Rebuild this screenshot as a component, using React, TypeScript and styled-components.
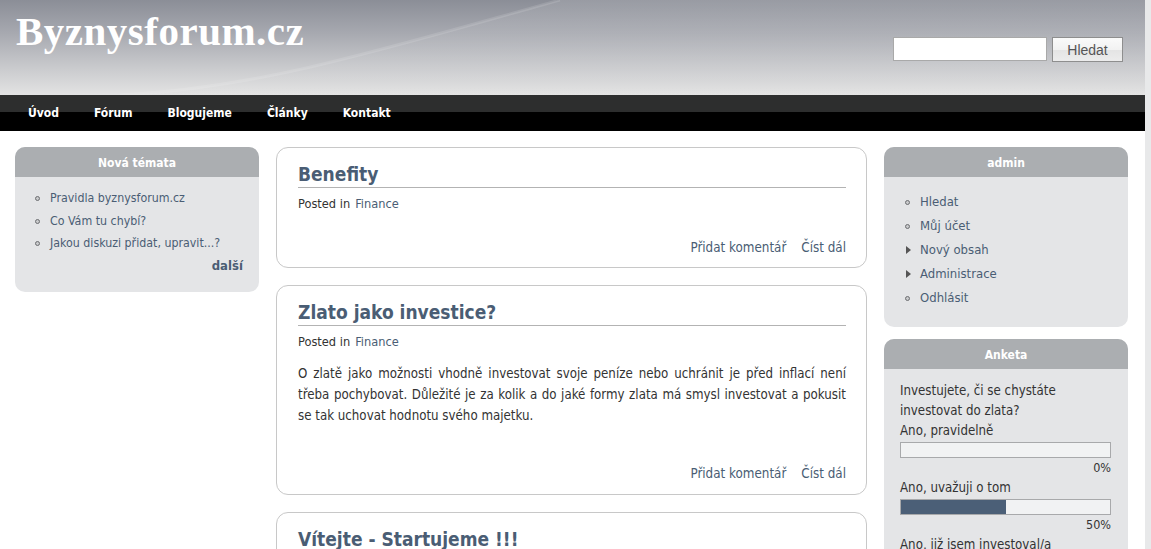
import React from "react";
import styled, { createGlobalStyle } from "styled-components";

const GlobalStyle = createGlobalStyle`
  html, body { margin: 0; padding: 0; }
  body {
    background: #e8e9ea;
    font-family: "DejaVu Sans Condensed", "DejaVu Sans", sans-serif;
    font-stretch: condensed;
    color: #333;
  }
`;

const Page = styled.div`
  width: 1145px;
  min-height: 549px;
  background: #fff;
`;

const Header = styled.header`
  position: relative;
  height: 95px;
  display: flex;
  justify-content: space-between;
  align-items: flex-start;
  overflow: hidden;
  background: linear-gradient(180deg, #8b8e97 0%, #a7a9b0 35%, #c8c9cc 70%, #e3e3e3 100%);
`;

const Swoosh = styled.svg`
  position: absolute;
  inset: 0;
  width: 100%;
  height: 100%;
  pointer-events: none;
`;

const Logo = styled.h1`
  position: relative;
  margin: 0;
  padding: 8px 0 0 16px;
  font-family: "Liberation Serif", "DejaVu Serif", serif;
  font-stretch: normal;
  font-weight: bold;
  font-size: 41px;
  line-height: 46px;
  color: #fff;
  letter-spacing: 0.5px;
`;

const SearchForm = styled.form`
  position: relative;
  display: flex;
  gap: 5px;
  margin: 37px 22px 0 0;
`;

const SearchInput = styled.input`
  box-sizing: border-box;
  width: 154px;
  height: 24px;
  border: 1px solid #a9a9a9;
  background: #fff;
  padding: 2px 4px;
`;

const SearchButton = styled.button`
  box-sizing: border-box;
  width: 71px;
  height: 25px;
  border: 1px solid #8e8e8e;
  background: linear-gradient(180deg, #fafafa 0%, #f2f2f2 50%, #e4e4e4 51%, #ececec 100%);
  font-family: "Liberation Sans", Arial, sans-serif;
  font-size: 14px;
  color: #555;
  padding: 0;
`;

const Nav = styled.nav`
  height: 36px;
  box-sizing: border-box;
  padding: 0 0 1px 28px;
  display: flex;
  align-items: center;
  gap: 35px;
  background: linear-gradient(180deg, #2d2e2e 0, #2d2e2e 17px, #000 17px, #000 100%);
`;

const NavLink = styled.a`
  color: #fff;
  font-weight: bold;
  font-size: 12px;
  text-decoration: none;
`;

const Main = styled.div`
  display: grid;
  grid-template-columns: 244px 591px 244px;
  column-gap: 17px;
  padding: 16px 17px 0 15px;
  align-items: start;
`;

const Column = styled.div<{ $gap: number }>`
  display: flex;
  flex-direction: column;
  gap: ${(p) => p.$gap}px;
`;

const Block = styled.section`
  border-radius: 10px;
  overflow: hidden;
  background: #e4e5e7;
`;

const BlockTitle = styled.h2`
  margin: 0;
  height: 30px;
  line-height: 33px;
  background: #abaeb1;
  color: #fff;
  font-size: 12px;
  font-weight: bold;
  text-align: center;
`;

const BlockBody = styled.div<{ $pad: string }>`
  padding: ${(p) => p.$pad};
`;

const List = styled.ul<{ $lh: number; $size: number }>`
  list-style: none;
  margin: 0;
  padding: 0;
  font-size: ${(p) => p.$size}px;
  line-height: ${(p) => p.$lh}px;
`;

const Item = styled.li<{ $indent: number }>`
  position: relative;
  padding-left: ${(p) => p.$indent}px;
`;

const Bullet = styled.span<{ $kind: "leaf" | "collapsed"; $left: number }>`
  position: absolute;
  left: ${(p) => p.$left}px;
  top: 50%;
  ${(p) =>
    p.$kind === "leaf"
      ? `
    width: 3px; height: 3px; margin-top: -2px;
    border: 1px solid #6d6f72; border-radius: 50%; background: #c9cacc;
  `
      : `
    width: 0; height: 0; margin-top: -4px;
    border-top: 4px solid transparent; border-bottom: 4px solid transparent;
    border-left: 5px solid #555;
  `}
`;

const ItemLink = styled.a`
  color: #4a5d74;
  text-decoration: none;
`;

const More = styled.div`
  text-align: right;
  font-weight: bold;
  font-size: 13px;
  color: #4a5d74;
  margin-top: 1px;
  line-height: 20px;
`;

const Post = styled.article<{ $bottom: number }>`
  border: 1px solid #c8c8c8;
  border-radius: 12px;
  padding: 14px 20px ${(p) => p.$bottom}px 21px;
  background: #fff;
`;

const PostTitle = styled.h2`
  margin: 0;
  font-size: 19px;
  font-weight: bold;
  color: #4a5d74;
  line-height: 25px;
  border-bottom: 1px solid #b3b3b3;
`;

const Meta = styled.div`
  font-size: 12.7px;
  line-height: 20px;
  margin-top: 6px;
  color: #333;
`;

const MetaLink = styled.a`
  color: #4a5d74;
  text-decoration: none;
  margin-left: 5px;
`;

const PostBody = styled.div`
  margin: 11px 0 0;
  font-size: 13.2px;
  line-height: 21px;
  color: #333;
`;

const BodyLine = styled.span<{ $last?: boolean }>`
  display: block;
  text-align: ${(p) => (p.$last ? "left" : "justify")};
  text-align-last: ${(p) => (p.$last ? "left" : "justify")};
`;

const PostLinks = styled.div<{ $top: number }>`
  display: flex;
  justify-content: flex-end;
  gap: 15px;
  margin-top: ${(p) => p.$top}px;
  font-size: 13.3px;
  line-height: 20px;
`;

const PostLink = styled.a`
  color: #4a5d74;
  text-decoration: none;
`;

const PollQuestion = styled.div`
  max-width: 180px;
  font-size: 13.2px;
  line-height: 20px;
  color: #333;
`;

const PollText = styled.div`
  font-size: 13.2px;
  line-height: 20px;
  color: #333;
`;

const PollBar = styled.div`
  height: 14px;
  border: 1px solid #a8a9ab;
  background: #f1f2f3;
  margin-top: 1px;
`;

const PollFill = styled.div`
  height: 100%;
  background: #4b5f77;
`;

const PollPercent = styled.div`
  text-align: right;
  font-size: 12.5px;
  line-height: 20px;
  color: #333;
`;

const navItems = ["Úvod", "Fórum", "Blogujeme", "Články", "Kontakt"];
const newTopics = ["Pravidla byznysforum.cz", "Co Vám tu chybí?", "Jakou diskuzi přidat, upravit...?"];
const adminItems: { label: string; kind: "leaf" | "collapsed" }[] = [
  { label: "Hledat", kind: "leaf" },
  { label: "Můj účet", kind: "leaf" },
  { label: "Nový obsah", kind: "collapsed" },
  { label: "Administrace", kind: "collapsed" },
  { label: "Odhlásit", kind: "leaf" },
];
const pollOptions = [
  { label: "Ano, pravidelně", pct: 0 },
  { label: "Ano, uvažuji o tom", pct: 50 },
  { label: "Ano, již jsem investoval/a", pct: 50 },
];
const goldLines = [
  "O zlatě jako možnosti vhodně investovat svoje peníze nebo uchránit je před inflací není",
  "třeba pochybovat. Důležité je za kolik a do jaké formy zlata má smysl investovat a pokusit",
  "se tak uchovat hodnotu svého majetku.",
];

export default function App() {
  return (
    <Page>
      <GlobalStyle />
      <Header>
        <Swoosh viewBox="0 0 1145 95" preserveAspectRatio="none">
          <defs>
            <linearGradient id="sw" x1="0" y1="0" x2="0" y2="1">
              <stop offset="0" stopColor="#ffffff" stopOpacity="0.12" />
              <stop offset="1" stopColor="#ffffff" stopOpacity="0.02" />
            </linearGradient>
          </defs>
          <path d="M120 95 C 260 88, 380 50, 560 0 L1145 0 L1145 95 Z" fill="url(#sw)" />
          <path d="M120 95 C 260 88, 380 50, 560 0" fill="none" stroke="#ffffff" strokeOpacity="0.12" strokeWidth="3" />
        </Swoosh>
        <Logo>Byznysforum.cz</Logo>
        <SearchForm onSubmit={(e) => e.preventDefault()}>
          <SearchInput type="text" />
          <SearchButton type="submit">Hledat</SearchButton>
        </SearchForm>
      </Header>
      <Nav>
        {navItems.map((n) => (
          <NavLink key={n} href="#">
            {n}
          </NavLink>
        ))}
      </Nav>
      <Main>
        <Column $gap={12}>
          <Block>
            <BlockTitle>Nová témata</BlockTitle>
            <BlockBody $pad="10px 16px 16px 0">
              <List $lh={22.5} $size={12.3}>
                {newTopics.map((t) => (
                  <Item key={t} $indent={35}>
                    <Bullet $kind="leaf" $left={20} />
                    <ItemLink href="#">{t}</ItemLink>
                  </Item>
                ))}
              </List>
              <More>další</More>
            </BlockBody>
          </Block>
        </Column>
        <Column $gap={17}>
          <Post $bottom={9}>
            <PostTitle>Benefity</PostTitle>
            <Meta>
              Posted in<MetaLink href="#">Finance</MetaLink>
            </Meta>
            <PostLinks $top={24}>
              <PostLink href="#">Přidat komentář</PostLink>
              <PostLink href="#">Číst dál</PostLink>
            </PostLinks>
          </Post>
          <Post $bottom={10}>
            <PostTitle>Zlato jako investice?</PostTitle>
            <Meta>
              Posted in<MetaLink href="#">Finance</MetaLink>
            </Meta>
            <PostBody>
              {goldLines.map((l, i) => (
                <BodyLine key={i} $last={i === goldLines.length - 1}>
                  {l}
                </BodyLine>
              ))}
            </PostBody>
            <PostLinks $top={38}>
              <PostLink href="#">Přidat komentář</PostLink>
              <PostLink href="#">Číst dál</PostLink>
            </PostLinks>
          </Post>
          <Post $bottom={9}>
            <PostTitle>Vítejte - Startujeme !!!</PostTitle>
            <Meta>
              Posted in<MetaLink href="#">Novinky</MetaLink>
            </Meta>
          </Post>
        </Column>
        <Column $gap={12}>
          <Block>
            <BlockTitle>admin</BlockTitle>
            <BlockBody $pad="13px 16px 17px 0">
              <List $lh={24} $size={13}>
                {adminItems.map((a) => (
                  <Item key={a.label} $indent={36}>
                    <Bullet $kind={a.kind} $left={a.kind === "leaf" ? 21 : 22} />
                    <ItemLink href="#">{a.label}</ItemLink>
                  </Item>
                ))}
              </List>
            </BlockBody>
          </Block>
          <Block>
            <BlockTitle>Anketa</BlockTitle>
            <BlockBody $pad="12px 17px 14px 16px">
              <PollQuestion>Investujete, či se chystáte investovat do zlata?</PollQuestion>
              {pollOptions.map((o) => (
                <div key={o.label}>
                  <PollText>{o.label}</PollText>
                  <PollBar>
                    <PollFill style={{ width: `${o.pct}%` }} />
                  </PollBar>
                  <PollPercent>{o.pct}%</PollPercent>
                </div>
              ))}
            </BlockBody>
          </Block>
        </Column>
      </Main>
    </Page>
  );
}
